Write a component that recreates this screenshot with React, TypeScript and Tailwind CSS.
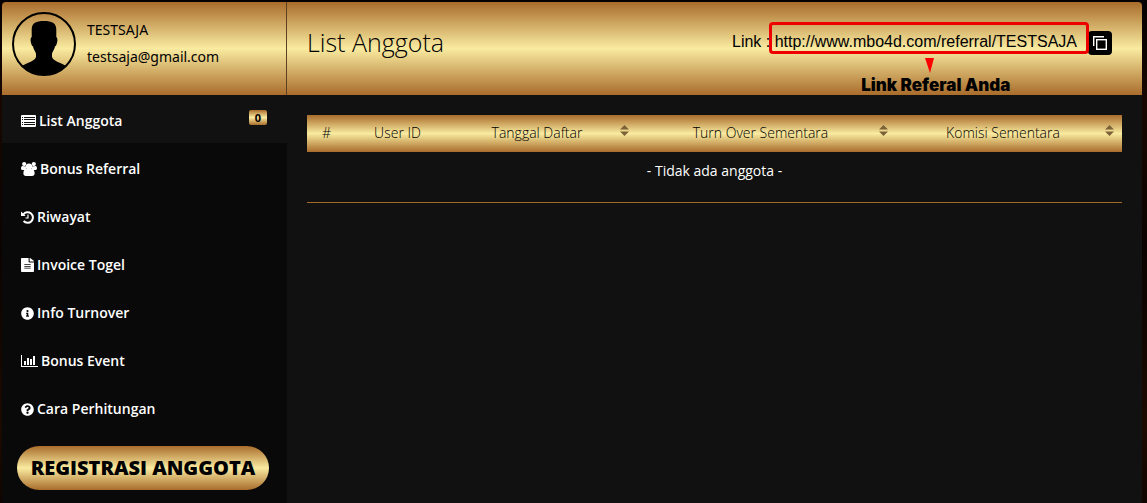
import type { ReactNode } from "react";
import { FaFileAlt, FaInfoCircle, FaQuestionCircle } from "react-icons/fa";

const GOLD = "bg-[linear-gradient(to_bottom,#a96c2b,#f9eba0_50%,#a96c2b)]";

const REFERRAL_URL = "http://www.mbo4d.com/referral/TESTSAJA";

function ListIcon() {
  return (
    <svg width="15" height="12" viewBox="0 0 15 12" fill="currentColor">
      <path
        fillRule="evenodd"
        d="M1 0h13a1 1 0 0 1 1 1v10a1 1 0 0 1-1 1H1a1 1 0 0 1-1-1V1a1 1 0 0 1 1-1zM1 2v1h1V2zM3 2v1h11V2zM1 4v1h1V4zM3 4v1h11V4zM1 7v1h1V7zM3 7v1h11V7zM1 9v1h1V9zM3 9v1h11V9z"
      />
    </svg>
  );
}

function GroupIcon() {
  return (
    <svg width="16" height="14" viewBox="0 0 16 14" fill="currentColor">
      <circle cx="3.2" cy="2.1" r="2.1" />
      <circle cx="12.8" cy="2.1" r="2.1" />
      <path d="M1.300 4C.3 4 0 5.500 0 6.500 0 7.400.6 8 1.600 8h3.600L5 4.500zM14.700 4c1 0 1.300 1.500 1.300 2.500 0 .9-.6 1.500-1.600 1.500h-3.600L11 4.500z" />
      <circle cx="8" cy="4.600" r="3.200" />
      <path d="M4.800 7.100h6.400c1.800.1 2.400 2.200 2.400 4.400 0 1.600-1 2.500-2.500 2.500H4.900c-1.500 0-2.500-.9-2.500-2.500 0-2.200.6-4.300 2.400-4.400z" />
    </svg>
  );
}

function HistoryIcon() {
  return (
    <svg width="13" height="13" viewBox="0 0 13 13" fill="none" stroke="currentColor">
      <path d="M2.300 3.500A5.300 5.300 0 1 1 2.600 10" strokeWidth="2" />
      <path d="M0 .500V5h4.700z" fill="currentColor" stroke="none" />
      <path d="M7 3.500V7H4.500" strokeWidth="1.200" />
    </svg>
  );
}

function ChartIcon() {
  return (
    <svg width="17" height="12" viewBox="0 0 17 12" fill="currentColor">
      <path d="M0 0h1v11h16v1H0zM3 6h2v4H3zM6 3h2v7H6zM9 4h2v6H9zM12 1h2v9h-2z" />
    </svg>
  );
}

function Avatar() {
  return (
    <svg className="size-16 shrink-0" viewBox="0 0 64 64" role="img" aria-label="Avatar">
      <defs>
        <clipPath id="avatar">
          <circle cx="32" cy="32" r="31" />
        </clipPath>
      </defs>
      <path
        clipPath="url(#avatar)"
        d="M32 9c-8 0-12 2-12.300 8v8c-1.500 1-1.300 4-.5 6.500.4 1.500 1 2.500 1.800 3C21.500 37.500 24 40 24 42v3c-1 3-4 4-7 5.500-3 1.200-6 2.500-8 4.500v9h46v-9c-2-2-5-3.300-8-4.500-3-1.500-6-2.500-7-5.500v-3c0-2 2.500-4.500 3-7.500.8-.5 1.400-1.500 1.800-3 .8-2.500 1-5.500-.5-6.500v-8c-.3-6-4.300-8-12.300-8z"
      />
      <circle cx="32" cy="32" r="31" fill="none" stroke="#000" strokeWidth="2" />
    </svg>
  );
}

function CopyIcon() {
  return (
    <svg width="16" height="16" viewBox="0 0 16 16" fill="none" stroke="#fff" strokeWidth="1.4">
      <path d="M1.700 11V1.700H12" />
      <rect x="4.700" y="4.700" width="9.600" height="9.600" />
    </svg>
  );
}

type MenuItem = { label: string; icon: ReactNode; count?: number };

const MENU: MenuItem[] = [
  { label: "List Anggota", icon: <ListIcon />, count: 0 },
  { label: "Bonus Referral", icon: <GroupIcon /> },
  { label: "Riwayat", icon: <HistoryIcon /> },
  { label: "Invoice Togel", icon: <FaFileAlt className="h-3.5 w-[13px]" preserveAspectRatio="none" /> },
  { label: "Info Turnover", icon: <FaInfoCircle size={13} /> },
  { label: "Bonus Event", icon: <ChartIcon /> },
  { label: "Cara Perhitungan", icon: <FaQuestionCircle size={13} /> },
];

const COLUMNS = [
  { label: "#", width: "w-[39px]", sortable: false },
  { label: "User ID", width: "w-[103px]", sortable: false },
  { label: "Tanggal Daftar", width: "w-[188px]", sortable: true },
  { label: "Turn Over Sementara", width: "w-[259px]", sortable: true },
  { label: "Komisi Sementara", width: "w-[226px]", sortable: true },
];

function SortButton({ label }: { label: string }) {
  return (
    <button type="button" aria-label={`Urutkan ${label}`} className="absolute top-2.5 right-2 cursor-pointer">
      <svg width="9" height="11" viewBox="0 0 9 11" fill="#7d6238">
        <path d="M4.500 0L9 4.500H0zM0 6.500h9L4.500 11z" />
      </svg>
    </button>
  );
}

function Sidebar() {
  return (
    <aside className="w-[285px] shrink-0 bg-[#090909]">
      <nav>
        {MENU.map((item, i) => (
          <a
            key={item.label}
            href="#"
            className={`flex h-12 items-center gap-[3px] pt-1 pr-5 pl-[19px] text-sm font-semibold text-white ${i === 0 ? "bg-[#111]" : ""}`}
          >
            {item.icon}
            {item.label}
            {item.count !== undefined && (
              <span className={`mb-2 ml-auto rounded-xs px-1.5 text-[11px] leading-[15px] font-bold text-black ${GOLD}`}>
                {item.count}
              </span>
            )}
          </a>
        ))}
      </nav>
      <button
        type="button"
        className={`mt-[15px] ml-[15px] h-11 w-[252px] cursor-pointer rounded-full text-xl font-extrabold whitespace-nowrap text-black ${GOLD}`}
      >
        REGISTRASI ANGGOTA
      </button>
    </aside>
  );
}

function Header() {
  return (
    <header className={`flex h-[93px] rounded-t-sm text-black ${GOLD}`}>
      <div className="flex w-[285px] shrink-0 gap-[11px] border-r border-[#5c4020] pt-2.5 pl-2.5">
        <Avatar />
        <div className="pt-1 font-['Noto_Sans',sans-serif] text-sm leading-[27px]">
          <p>TESTSAJA</p>
          <p>testsaja@gmail.com</p>
        </div>
      </div>
      <div className="flex flex-1 justify-between pr-[30px] pl-5">
        <h1 className="pt-6 text-[25px] leading-8 font-light">List Anggota</h1>
        <div className="flex items-start pt-7 font-['Liberation_Sans',Arial,sans-serif] text-base leading-6">
          <span className="whitespace-pre">Link : </span>
          <div className="relative mr-[11px]">
            <a href="#">{REFERRAL_URL}</a>
            {/* callout frame, arrow and caption */}
            <span className="pointer-events-none absolute -top-2 -right-3 -left-1.5 h-8 rounded-sm border-3 border-[#ee0000]" />
            <div className="pointer-events-none absolute inset-x-0 top-7 flex flex-col items-center pl-5">
              <svg className="mr-3" width="9" height="15" viewBox="0 0 9 15" fill="#f00">
                <path d="M0 0h9L5 15z" />
              </svg>
              <span className="font-['Inter',sans-serif] text-[17px] leading-6 font-black whitespace-nowrap">
                Link Referal Anda
              </span>
            </div>
          </div>
          <button
            type="button"
            aria-label="Salin link"
            className="mt-px flex size-6 cursor-pointer items-center justify-center rounded-sm bg-black"
          >
            <CopyIcon />
          </button>
        </div>
      </div>
    </header>
  );
}

function MemberTable() {
  return (
    <div className="border-b border-b-[#a46a2a]">
      <table className="w-full table-fixed text-sm">
        <thead>
          <tr className={`h-[37px] text-black ${GOLD}`}>
            {COLUMNS.map((col) => (
              <th
                key={col.label}
                className={`relative pb-0.5 font-light ${col.width} ${col.sortable ? "pr-[18px] pl-1.5" : ""}`}
              >
                {col.label}
                {col.sortable && <SortButton label={col.label} />}
              </th>
            ))}
          </tr>
        </thead>
        <tbody>
          <tr className="h-[50px] text-center align-top text-white">
            <td colSpan={COLUMNS.length} className="pt-[9px]">
              - Tidak ada anggota -
            </td>
          </tr>
        </tbody>
      </table>
    </div>
  );
}

export default function App() {
  return (
    <div className="min-h-screen bg-[linear-gradient(to_bottom,#050100,#180700_20%,#0b0300_50%,#1c0a00_85%,#100500)] pt-0.5 pr-[5px] pl-0.5 font-['Open_Sans','Noto_Sans',sans-serif]">
      <Header />
      <div className="flex min-h-[calc(100vh-95px)]">
        <Sidebar />
        <main className="min-w-0 flex-1 bg-[#111] px-5 pt-5">
          <MemberTable />
        </main>
      </div>
    </div>
  );
}
